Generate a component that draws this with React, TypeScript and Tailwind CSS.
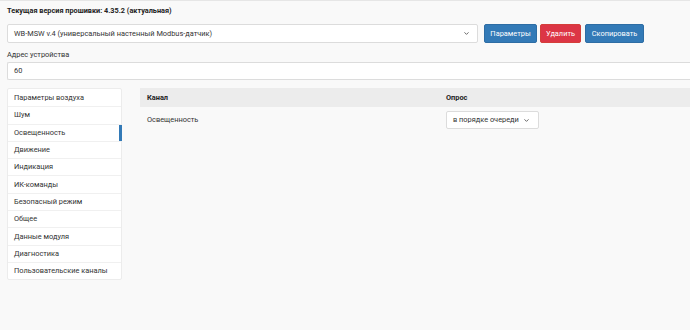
import { ChevronDown } from "lucide-react";

const groups = [
  "Параметры воздуха",
  "Шум",
  "Освещенность",
  "Движение",
  "Индикация",
  "ИК-команды",
  "Безопасный режим",
  "Общее",
  "Данные модуля",
  "Диагностика",
  "Пользовательские каналы",
];

export default function App() {
  return (
    <div className="w-[690px] h-[330px] overflow-hidden bg-[#f9f9f9] border-t border-[#e6e6e6] font-['Roboto',sans-serif] text-[#333] text-[7.4px] leading-[10px]">
      <div className="pl-[7px]">
        {/* Firmware */}
        <div className="pt-[5px] h-[18px] font-bold text-[7.3px] text-[#222]">
          Текущая версия прошивки: 4.35.2 (актуальная)
        </div>

        {/* Device type + actions */}
        <div className="flex items-center mt-[5px] h-[19px]">
          <div className="w-[471px] h-[19px] bg-white border border-[#dcdcdc] rounded-[2px] flex items-center justify-between pl-[6px] pr-[7px]">
            <span>WB-MSW v.4 (универсальный настенный Modbus-датчик)</span>
            <ChevronDown size={7} strokeWidth={3} className="text-[#555]" />
          </div>
          <button className="ml-[6px] h-[19px] w-[53px] bg-[#337ab7] border border-[#2e6da4] rounded-[2px] text-white">
            Параметры
          </button>
          <button className="ml-[3px] h-[19px] w-[41px] bg-[#dc3545] border border-[#d43f3a] rounded-[2px] text-white">
            Удалить
          </button>
          <button className="ml-[4px] h-[19px] w-[59px] bg-[#337ab7] border border-[#2e6da4] rounded-[2px] text-white">
            Скопировать
          </button>
        </div>

        {/* Address */}
        <div className="mt-[5px] h-[13px] leading-[13px]">Адрес устройства</div>
        <div className="mt-[1px] h-[18px] bg-white border-y border-l border-[#dcdcdc] rounded-l-[2px] flex items-center pl-[6px]">
          60
        </div>

        {/* Body */}
        <div className="flex mt-[8px]">
          <ul className="w-[115px] bg-white border border-[#ececec] rounded-[2px]">
            {groups.map((g, i) => (
              <li
                key={g}
                className={
                  "relative h-[17.3px] flex items-center pl-[6px] " +
                  (i > 0 ? "border-t border-[#f0f0f0]" : "")
                }
              >
                {g}
                {i === 2 && (
                  <span className="absolute right-[-1px] top-0 bottom-0 w-[3px] bg-[#337ab7]" />
                )}
              </li>
            ))}
          </ul>

          <div className="flex-1 ml-[18px]">
            <div className="flex h-[19px] items-center bg-[#ececec] font-bold text-[#222]">
              <div className="w-[306px] pl-[7px]">Канал</div>
              <div>Опрос</div>
            </div>
            <div className="flex items-center h-[26px]">
              <div className="w-[306px] pl-[7px]">Освещенность</div>
              <div className="h-[18px] w-[93px] bg-white border border-[#dcdcdc] rounded-[2px] flex items-center justify-between pl-[6px] pr-[8px]">
                <span>в порядке очереди</span>
                <ChevronDown size={7} strokeWidth={3} className="text-[#555]" />
              </div>
            </div>
          </div>
        </div>
      </div>
    </div>
  );
}
